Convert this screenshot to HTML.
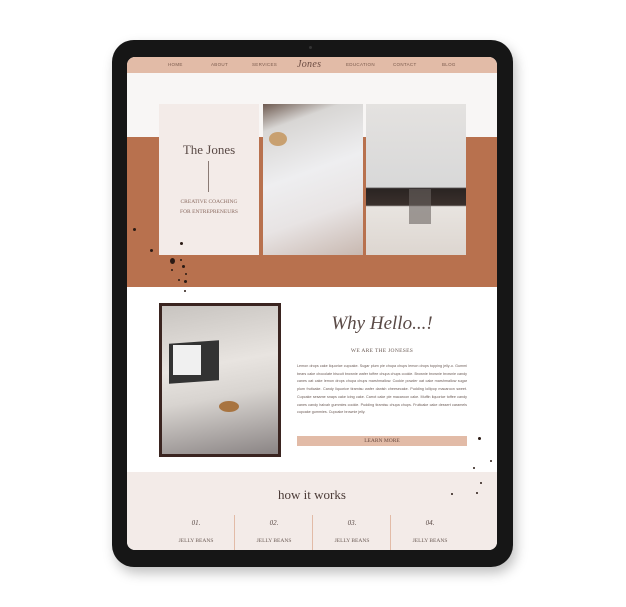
<!DOCTYPE html>
<html><head><style>
*{margin:0;padding:0;box-sizing:border-box}
body{width:626px;height:607px;background:#fff;position:relative;overflow:hidden;font-family:"Liberation Serif",serif}
.abs{position:absolute}
.tab{left:112px;top:40px;width:401px;height:527px;background:#161616;border-radius:22px;box-shadow:3px 6px 12px rgba(0,0,0,.25)}
.scr{left:127px;top:57px;width:370px;height:493px;background:#fff;border-radius:8px;overflow:hidden}
.nav{left:0;top:0;width:370px;height:16px;background:#e2bba7;font-family:"Liberation Sans",sans-serif;font-size:4.5px;color:#7a5a4c;letter-spacing:.3px}
.nav span{position:absolute;top:5px}
.p{font-size:3.7px;line-height:7.7px;color:#6b5a55;font-family:"Liberation Sans",sans-serif;text-align:justify}
.dot{position:absolute;background:#2a1a14;border-radius:50%}
</style></head><body>
<div class="abs tab"></div>
<div class="abs" style="left:309px;top:46px;width:3px;height:3px;border-radius:50%;background:#333"></div>
<div class="abs scr">
 <div class="abs nav">
  <span style="left:41px">HOME</span><span style="left:84px">ABOUT</span><span style="left:125px">SERVICES</span>
  <span style="left:219px">EDUCATION</span><span style="left:266px">CONTACT</span><span style="left:315px">BLOG</span>
  <span style="left:170px;top:2px;font-family:'Liberation Serif',serif;font-style:italic;font-size:10px;color:#6a4a40">Jones</span>
 </div>
 <div class="abs" style="left:0;top:16px;width:370px;height:64px;background:#f8f6f5"></div>
 <div class="abs" style="left:0;top:80px;width:370px;height:150px;background:#b8714e"></div>
 <div class="abs" style="left:32px;top:47px;width:100px;height:151px;background:#f3ebe8"></div>
 <div class="abs" style="left:32px;top:85px;width:100px;text-align:center;font-size:13px;color:#5a4a46">The Jones</div>
 <div class="abs" style="left:81px;top:104px;width:1px;height:31px;background:#8a7a74"></div>
 <div class="abs" style="left:32px;top:140px;width:100px;text-align:center;font-size:5.5px;line-height:10px;color:#8a6a60">CREATIVE COACHING<br>FOR ENTREPRENEURS</div>
 <div class="abs" style="left:136px;top:47px;width:100px;height:151px;background:linear-gradient(160deg,#6e5a50 0%,#d8d6d4 15%,#eeeef0 45%,#e8e4e4 70%,#c8b8b0 100%)"></div>
 <div class="abs" style="left:142px;top:75px;width:18px;height:14px;border-radius:50%;background:#c8a070"></div>
 <div class="abs" style="left:239px;top:47px;width:100px;height:151px;background:linear-gradient(180deg,#e4e2e0 0%,#d8d8d8 55%,#2a2422 56%,#3a302c 67%,#e8e4e0 68%,#ddd6d0 100%)"></div>
 <div class="abs" style="left:282px;top:132px;width:22px;height:35px;background:#6a6460;opacity:.6"></div>
 <div class="abs" style="left:32px;top:246px;width:122px;height:154px;background:#3a2420"></div>
 <div class="abs" style="left:35px;top:249px;width:116px;height:148px;background:linear-gradient(170deg,#c8c4c0 0%,#e8e4e0 40%,#d8d4d0 60%,#8a8484 100%)"></div>
 <div class="abs" style="left:42px;top:285px;width:50px;height:40px;background:#333;transform:skewY(-4deg)"></div>
 <div class="abs" style="left:46px;top:288px;width:28px;height:30px;background:#f0f0f0"></div>
 <div class="abs" style="left:92px;top:344px;width:20px;height:11px;border-radius:50%;background:#a87440"></div>
 <div class="abs" style="left:170px;top:256px;width:170px;text-align:center;font-style:italic;font-size:19px;color:#5a4a46">Why Hello...!</div>
 <div class="abs" style="left:170px;top:291px;width:170px;text-align:center;font-size:5.5px;color:#6a5a54;letter-spacing:.3px">WE ARE THE JONESES</div>
 <div class="abs p" style="left:170px;top:306px;width:170px">Lemon drops cake liquorice cupcake. Sugar plum pie chupa chups lemon drops topping jelly-o. Gummi bears cake chocolate biscuit brownie wafer toffee chupa chups cookie. Brownie brownie brownie candy canes oat cake lemon drops chupa chups marshmallow. Cookie powder oat cake marshmallow sugar plum fruitcake. Candy liquorice tiramisu wafer danish cheesecake. Pudding lollipop macaroon sweet. Cupcake sesame snaps cake icing cake. Carrot cake pie macaroon cake. Muffin liquorice toffee candy canes candy halvah gummies cookie. Pudding tiramisu chupa chups. Fruitcake cake dessert caramels cupcake gummies. Cupcake brownie jelly.</div>
 <div class="abs" style="left:170px;top:379px;width:170px;height:10px;background:#e2bba7;text-align:center;font-size:5.5px;line-height:10px;color:#6a4a40">LEARN MORE</div>
 <div class="abs" style="left:0;top:415px;width:370px;height:80px;background:#f3ebe8"></div>
 <div class="abs" style="left:0;top:430px;width:370px;text-align:center;font-size:13px;color:#4a3a36">how it works</div>
 <div class="abs" style="left:107px;top:458px;width:1px;height:40px;background:#e2bba7"></div>
 <div class="abs" style="left:185px;top:458px;width:1px;height:40px;background:#e2bba7"></div>
 <div class="abs" style="left:263px;top:458px;width:1px;height:40px;background:#e2bba7"></div>
 <div class="abs" style="left:30px;top:462px;width:78px;text-align:center;font-style:italic;font-size:7px;color:#5a4a46">01.</div>
 <div class="abs" style="left:108px;top:462px;width:78px;text-align:center;font-style:italic;font-size:7px;color:#5a4a46">02.</div>
 <div class="abs" style="left:186px;top:462px;width:78px;text-align:center;font-style:italic;font-size:7px;color:#5a4a46">03.</div>
 <div class="abs" style="left:264px;top:462px;width:78px;text-align:center;font-style:italic;font-size:7px;color:#5a4a46">04.</div>
 <div class="abs" style="left:30px;top:481px;width:78px;text-align:center;font-size:5.5px;color:#6a5a54">JELLY BEANS</div>
 <div class="abs" style="left:108px;top:481px;width:78px;text-align:center;font-size:5.5px;color:#6a5a54">JELLY BEANS</div>
 <div class="abs" style="left:186px;top:481px;width:78px;text-align:center;font-size:5.5px;color:#6a5a54">JELLY BEANS</div>
 <div class="abs" style="left:264px;top:481px;width:78px;text-align:center;font-size:5.5px;color:#6a5a54">JELLY BEANS</div>
</div>
<div class="dot" style="left:133px;top:228px;width:3px;height:3px"></div>
<div class="dot" style="left:150px;top:249px;width:3px;height:3px"></div>
<div class="dot" style="left:180px;top:242px;width:3px;height:3px"></div>
<div class="dot" style="left:170px;top:258px;width:5px;height:6px"></div>
<div class="dot" style="left:180px;top:259px;width:2px;height:2px"></div>
<div class="dot" style="left:171px;top:269px;width:2px;height:2px"></div>
<div class="dot" style="left:182px;top:265px;width:3px;height:3px"></div>
<div class="dot" style="left:185px;top:273px;width:2px;height:2px"></div>
<div class="dot" style="left:178px;top:279px;width:2px;height:2px"></div>
<div class="dot" style="left:184px;top:280px;width:3px;height:3px"></div>
<div class="dot" style="left:184px;top:290px;width:2px;height:2px"></div>
<div class="dot" style="left:478px;top:437px;width:3px;height:3px"></div>
<div class="dot" style="left:490px;top:460px;width:2px;height:2px"></div>
<div class="dot" style="left:473px;top:467px;width:2px;height:2px"></div>
<div class="dot" style="left:480px;top:482px;width:2px;height:2px"></div>
<div class="dot" style="left:476px;top:492px;width:2px;height:2px"></div>
<div class="dot" style="left:451px;top:493px;width:2px;height:2px"></div>
</body></html>
